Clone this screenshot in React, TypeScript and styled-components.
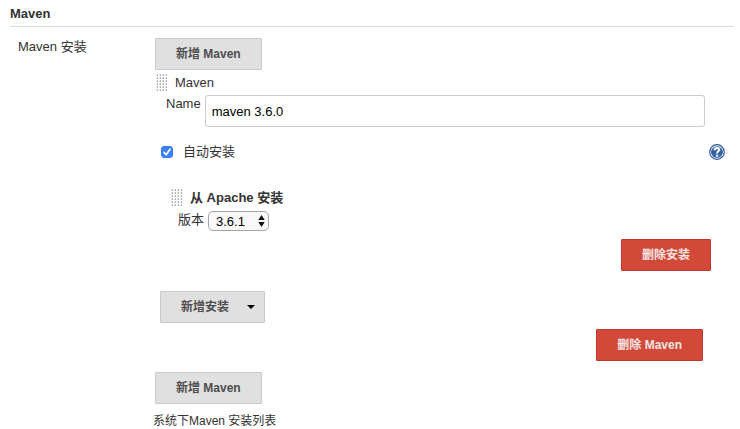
import React from "react";
import styled, { createGlobalStyle } from "styled-components";

const GlobalStyle = createGlobalStyle`
  *, *::before, *::after { box-sizing: border-box; }
  body {
    margin: 0;
    background: #fff;
    color: #333;
    font: 13px/20px "Liberation Sans", "Noto Sans CJK SC", sans-serif;
  }
  button, input, select { font-family: inherit; }
`;

const Page = styled.main`
  padding: 4px 6px 0 10px;
`;

const SectionTitle = styled.h2`
  margin: 0;
  padding-bottom: 2px;
  border-bottom: 1px solid #ddd;
  font-size: 13px;
  line-height: 20px;
`;

const Setting = styled.section`
  display: grid;
  grid-template-columns: 145px minmax(0, 1fr);
  padding-top: 11px;
`;

const SettingName = styled.div`
  padding: 0 0 0 8px;
  line-height: 18px;
`;

const SettingMain = styled.div`
  display: flex;
  flex-direction: column;
  align-items: stretch;
`;

const Button = styled.button<{ $danger?: boolean }>`
  display: inline-flex;
  align-items: center;
  height: 32px;
  padding: 0 20px;
  border: 1px solid ${(p) => (p.$danger ? "#c03a2b" : "#c9c9c9")};
  border-radius: 1px;
  background: ${(p) => (p.$danger ? "#d24939" : "#e0e0e0")};
  color: ${(p) => (p.$danger ? "#f4e6e4" : "#4d4d4d")};
  font-size: 12px;
  line-height: 20px;
  font-weight: bold;
  white-space: nowrap;
`;

const MenuButton = styled(Button)`
  gap: 18px;
  padding-right: 9px;
`;

const ItemHeader = styled.div<{ $bold?: boolean }>`
  display: flex;
  align-items: center;
  gap: 8px;
  height: 25px;
  font-weight: ${(p) => (p.$bold ? "bold" : "normal")};
`;

const Tool = styled.div`
  padding-left: 1px;
`;

const NameRow = styled.div`
  display: flex;
  gap: 4px;
  padding: 0 29px 0 10px;
`;

const Label = styled.label`
  line-height: 18px;
  white-space: nowrap;
`;

const TextInput = styled.input`
  flex: 1;
  min-width: 0;
  height: 32px;
  padding: 0 6px;
  border: 1px solid #ccc;
  border-radius: 3px;
  background: #fff;
  color: #000;
  font-size: 13px;
`;

const AutoRow = styled.div`
  display: flex;
  align-items: center;
  justify-content: space-between;
  height: 18px;
  margin-top: 16px;
  padding: 0 9px 0 5px;
`;

const CheckLabel = styled.label`
  display: flex;
  align-items: center;
  gap: 10px;
`;

const CheckBox = styled.span`
  display: grid;
  width: 12px;
  height: 12px;

  & > * { grid-area: 1 / 1; }
  svg { pointer-events: none; }
`;

const CheckInput = styled.input`
  appearance: none;
  width: 12px;
  height: 12px;
  margin: 0;
  border: 1px solid #aaa;
  border-radius: 3px;
  background: #fff;

  &:checked { border-color: #3478f6; background: #3b82f8; }
  &:not(:checked) + svg { visibility: hidden; }
`;

const HelpLink = styled.a`
  display: flex;
`;

const Installer = styled.div`
  margin-top: 24px;
  padding-left: 15px;
`;

const VersionRow = styled.div`
  display: flex;
  gap: 4px;
  padding: 1px 0 0 7px;
`;

const SelectBox = styled.span`
  display: grid;
  align-items: center;
  justify-items: end;
  width: 61px;
  height: 20px;

  & > * { grid-area: 1 / 1; }
  svg { margin-right: 4px; pointer-events: none; }
`;

const Select = styled.select`
  appearance: none;
  width: 100%;
  height: 20px;
  padding: 0 7px;
  border: 1px solid #a6a6a6;
  border-radius: 5px;
  background: #f8f8f8;
  color: #000;
  font-size: 13px;
`;

const Actions = styled.div<{ $top: number; $right: number }>`
  display: flex;
  justify-content: flex-end;
  padding: ${(p) => p.$top}px ${(p) => p.$right}px 0 0;
`;

const AddRow = styled.div<{ $top?: number; $indent?: number }>`
  padding: ${(p) => p.$top ?? 0}px 0 0 ${(p) => p.$indent ?? 0}px;
  display: flex;
`;

const Description = styled.p`
  margin: 8px 0 0 -2px;
  font-size: 12px;
  line-height: 18px;
`;

function Grip() {
  const cells = Array.from({ length: 24 }, (_, i) => ({ x: (i % 4) * 3, y: Math.floor(i / 4) * 3 }));
  return (
    <svg width="11" height="17" viewBox="0 0 11 17" shapeRendering="crispEdges" aria-hidden="true">
      {cells.map(({ x, y }) => (
        <g key={`${x}-${y}`}>
          <rect x={x} y={y} width="2" height="2" fill="#e6e6e6" />
          <rect x={x + 1} y={y} width="1" height="1" fill="#c4c4c4" />
          <rect x={x + 1} y={y + 1} width="1" height="1" fill="#a8a8a8" />
        </g>
      ))}
    </svg>
  );
}

function HelpIcon() {
  return (
    <svg width="16" height="16" viewBox="0 0 16 16" aria-hidden="true">
      <defs>
        <linearGradient id="help-fill" x1="0" y1="0" x2="0" y2="1">
          <stop offset="0" stopColor="#6d8fc0" />
          <stop offset="0.5" stopColor="#2f5c9c" />
          <stop offset="1" stopColor="#4978b6" />
        </linearGradient>
      </defs>
      <circle cx="8" cy="8" r="7.3" fill="#fff" stroke="#2f568f" strokeWidth="1.2" />
      <circle cx="8" cy="8" r="6" fill="url(#help-fill)" />
      <path d="M5.8 6.2C5.8 3.2 10.4 3.4 10.2 6C10.1 7.4 8.1 7.4 8.1 9.4" fill="none" stroke="#fff" strokeWidth="1.9" />
      <rect x="7.1" y="10.6" width="2" height="2" fill="#fff" />
    </svg>
  );
}

export default function App() {
  return (
    <>
      <GlobalStyle />
      <Page>
        <SectionTitle>Maven</SectionTitle>
        <Setting>
          <SettingName>Maven 安装</SettingName>
          <SettingMain>
            <AddRow>
              <Button type="button">新增 Maven</Button>
            </AddRow>
            <Tool>
              <ItemHeader>
                <Grip />
                <span>Maven</span>
              </ItemHeader>
              <NameRow>
                <Label htmlFor="maven-name">Name</Label>
                <TextInput id="maven-name" type="text" defaultValue="maven 3.6.0" />
              </NameRow>
              <AutoRow>
                <CheckLabel>
                  <CheckBox>
                    <CheckInput type="checkbox" defaultChecked />
                    <svg width="12" height="12" viewBox="0 0 12 12" aria-hidden="true">
                      <path d="M3 6.4L5.1 8.8L9 3.2" fill="none" stroke="#fff" strokeWidth="1.6" strokeLinecap="round" strokeLinejoin="round" />
                    </svg>
                  </CheckBox>
                  自动安装
                </CheckLabel>
                <HelpLink href="#help" aria-label="帮助">
                  <HelpIcon />
                </HelpLink>
              </AutoRow>
              <Installer>
                <ItemHeader $bold>
                  <Grip />
                  <span>从 Apache 安装</span>
                </ItemHeader>
                <VersionRow>
                  <Label htmlFor="maven-version">版本</Label>
                  <SelectBox>
                    <Select id="maven-version" defaultValue="3.6.1">
                      <option>3.6.1</option>
                      <option>3.6.0</option>
                    </Select>
                    <svg width="7" height="12" viewBox="0 0 7 12" aria-hidden="true">
                      <path d="M3.5 0L6.7 5H0.3Z M3.5 12L6.7 7H0.3Z" fill="#111" />
                    </svg>
                  </SelectBox>
                </VersionRow>
                <Actions $top={8} $right={23}>
                  <Button type="button" $danger>删除安装</Button>
                </Actions>
              </Installer>
              <AddRow $top={20} $indent={4}>
                <MenuButton type="button" aria-haspopup="menu">
                  新增安装
                  <svg width="8" height="4" viewBox="0 0 8 4" aria-hidden="true">
                    <path d="M0 0H8L4 4Z" fill="#000" />
                  </svg>
                </MenuButton>
              </AddRow>
              <Actions $top={6} $right={31}>
                <Button type="button" $danger>删除 Maven</Button>
              </Actions>
            </Tool>
            <AddRow $top={11}>
              <Button type="button">新增 Maven</Button>
            </AddRow>
            <Description>系统下Maven 安装列表</Description>
          </SettingMain>
        </Setting>
      </Page>
    </>
  );
}
